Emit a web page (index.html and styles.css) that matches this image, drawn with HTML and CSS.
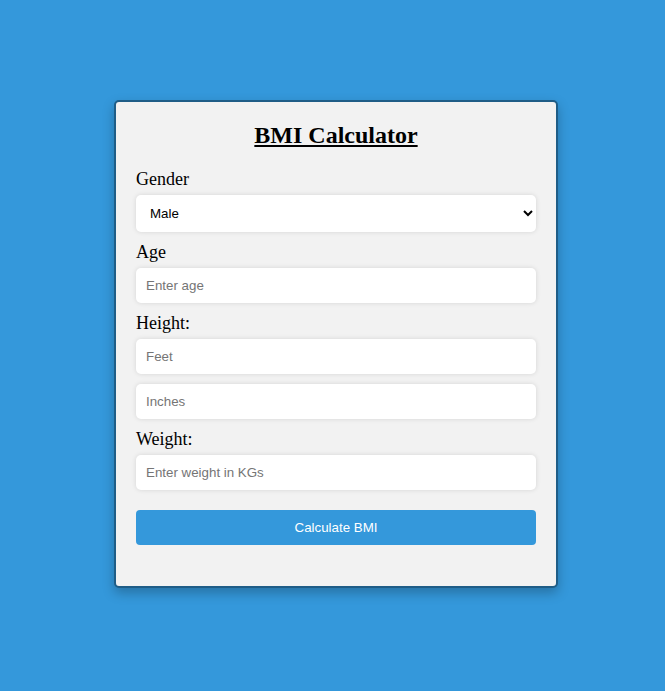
FILE: index.html
```html
<!DOCTYPE html>
<html>
<head>
<meta charset="utf-8">
<title>BMI Calculator</title>
<link rel="stylesheet" href="styles.css">
</head>
<body>
<div class="card">
  <h2 class="title">BMI Calculator</h2>
  <label class="label" for="gender">Gender</label>
  <select class="field select" id="gender">
    <option>Male</option>
    <option>Female</option>
  </select>
  <label class="label" for="age">Age</label>
  <input class="field" id="age" type="number" placeholder="Enter age">
  <label class="label" for="feet">Height:</label>
  <input class="field" id="feet" type="number" placeholder="Feet">
  <input class="field" id="inches" type="number" placeholder="Inches">
  <label class="label" for="weight">Weight:</label>
  <input class="field" id="weight" type="number" placeholder="Enter weight in KGs">
  <button class="btn" type="button">Calculate BMI</button>
</div>
</body>
</html>
```
FILE: styles.css
```css
html, body {
  margin: 0;
  padding: 0;
}
body {
  background: #3498db;
  font-family: "Liberation Serif", "Times New Roman", serif;
  display: flex;
  justify-content: center;
  padding: 100px 0 0 7px;
  min-height: 691px;
  box-sizing: border-box;
}
.card {
  width: 400px;
  padding: 20px 20px 41px;
  background: #f2f2f2;
  border: 2px solid #1f5d87;
  border-radius: 5px;
  box-shadow: 0 5px 12px rgba(0, 0, 0, 0.25);
  display: flex;
  flex-direction: column;
  align-self: flex-start;
}
.title {
  margin: 0 0 20px;
  text-align: center;
  font-size: 24px;
  font-weight: bold;
  text-decoration: underline;
  color: #000;
}
.label {
  display: block;
  font-size: 18px;
  margin-bottom: 5px;
  color: #000;
}
.field {
  box-sizing: border-box;
  width: 400px;
  height: 35px;
  margin: 0 0 10px;
  padding: 0 10px;
  border: none;
  border-radius: 5px;
  background: #fff;
  box-shadow: 0 0 5px rgba(0, 0, 0, 0.12);
  font-family: "Liberation Sans", Arial, sans-serif;
  font-size: 13.33px;
  color: #000;
  outline: none;
}
.field::placeholder {
  color: #757575;
}
.select {
  height: 37px;
}
.btn {
  margin-top: 10px;
  height: 35px;
  width: 400px;
  border: none;
  border-radius: 4px;
  background: #3498db;
  color: #fff;
  font-family: "Liberation Sans", Arial, sans-serif;
  font-size: 13.33px;
  cursor: pointer;
}
```
